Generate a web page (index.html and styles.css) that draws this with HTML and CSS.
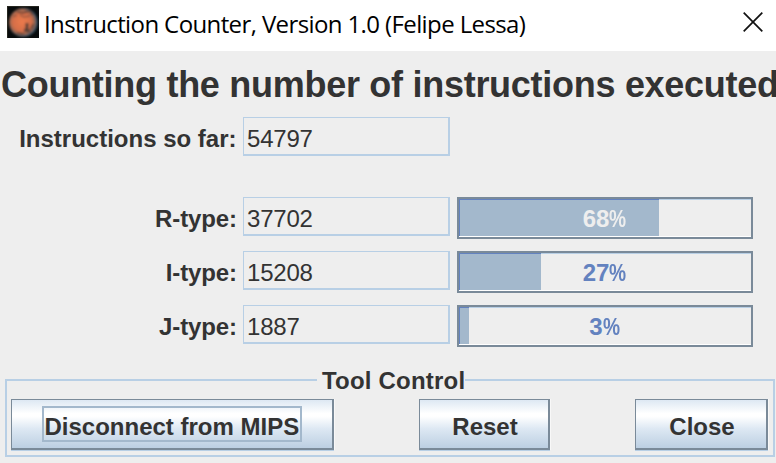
FILE: index.html
```html
<!DOCTYPE html>
<html lang="en">
<head>
<meta charset="utf-8">
<title>Instruction Counter</title>
<link rel="stylesheet" href="styles.css">
</head>
<body>
<header class="titlebar">
  <svg class="planet" width="32" height="32" viewBox="0 0 32 32">
    <defs>
      <radialGradient id="mars" cx="45%" cy="48%" r="54%">
        <stop offset="0" stop-color="#ec7a4c"/>
        <stop offset=".6" stop-color="#d46e48"/>
        <stop offset=".8" stop-color="#8f6350"/>
        <stop offset=".92" stop-color="#3f5666"/>
        <stop offset="1" stop-color="#142b3a"/>
      </radialGradient>
      <filter id="soft"><feGaussianBlur stdDeviation=".9"/></filter>
    </defs>
    <rect width="32" height="32" fill="#080b0c"/>
    <path d="M0 .5H32M.5 0V32" stroke="#26261f"/>
    <g filter="url(#soft)">
      <circle cx="16.5" cy="16.5" r="14.6" fill="url(#mars)"/>
      <g fill="none" stroke="#593f36">
        <path d="M10 6l6 1 7-2 3 4" stroke-width="1.6"/>
        <path d="M6 11l4-2M13 9l4 2 6-1" stroke-width=".8"/>
        <path d="M20 17v8M17 24l6 1" stroke-width="3"/>
        <path d="M26 18l-2 5M10 27l7 1" stroke-width="1.6"/>
      </g>
    </g>
  </svg>
  <h1 class="caption">Instruction Counter, Version 1.0 (Felipe Lessa)</h1>
  <svg class="close" width="20" height="20" viewBox="0 0 20 20"><path d="M.7 .7L19.3 19.3M19.3 .7L.7 19.3" stroke="#111" stroke-width="1.7"/></svg>
</header>
<main>
  <h2 class="heading">Counting the number of instructions executed</h2>
  <div class="row total"><label>Instructions so far:</label><div class="field">54797</div></div>
  <div class="row"><label>R-type:</label><div class="field">37702</div><div class="bar"><div class="fill" style="width:200px"></div><span class="pct light">68<span class="sign">%</span></span></div></div>
  <div class="row"><label>I-type:</label><div class="field">15208</div><div class="bar"><div class="fill" style="width:82px"></div><span class="pct">27<span class="sign">%</span></span></div></div>
  <div class="row"><label>J-type:</label><div class="field">1887</div><div class="bar"><div class="fill" style="width:10px"></div><span class="pct">3<span class="sign">%</span></span></div></div>
  <section class="control">
    <h3 class="legend">Tool Control</h3>
    <div class="button connect"><span class="focus">Disconnect from MIPS</span></div>
    <div class="button reset">Reset</div>
    <div class="button quit">Close</div>
  </section>
</main>
</body>
</html>
```
FILE: styles.css
```css
* { box-sizing: border-box; }
body {
  margin: 0;
  width: 776px;
  height: 463px;
  overflow: hidden;
  background: #eee;
  color: #333;
  font: 24px/28px "Liberation Sans", Arial, sans-serif;
  white-space: nowrap;
}
h1, h2, h3 { margin: 0; font-size: inherit; }
.titlebar {
  display: flex;
  height: 51px;
  padding: 6px 13px 0 7px;
  background: #fff;
}
.planet { flex: none; }
.caption {
  flex: 1;
  padding: 1px 0 0 5px;
  font: 24px/34px "Open Sans", "Noto Sans", sans-serif;
  color: #000;
  letter-spacing: -0.61px;
}
.close { margin-top: 6px; flex: none; }
.heading {
  height: 66px;
  padding: 13px 0 0 1px;
  font-size: 36px;
  line-height: 42px;
  letter-spacing: -0.28px;
}
.row {
  display: flex;
  height: 42px;
  margin-bottom: 12px;
}
.row.total { height: 39px; margin-bottom: 41px; }
label {
  width: 243px;
  padding: 8px 6px 0 0;
  text-align: right;
  font-weight: bold;
  letter-spacing: -0.1px;
}
.total label { letter-spacing: 0; padding-right: 6.5px; }
.field {
  width: 207px;
  height: 39px;
  margin-right: 7px;
  padding: 7px 3px 0;
  border: solid #b8cfe5;
  border-width: 1px 2px 2px 1px;
  letter-spacing: -0.2px;
}
.bar {
  display: grid;
  width: 296px;
  height: 42px;
  border: 2px solid #7a8a99;
  box-shadow: inset 0 1px #b8cfe5, inset 0 -1px #fff;
}
.bar > * { grid-area: 1 / 1; }
.fill {
  height: 37px;
  background: #a3b8cc;
  border: solid #6382bf;
  border-width: 1px 0 0 1px;
}
.pct {
  padding: 6px 1px 0 0;
  text-align: center;
  font-weight: bold;
  color: #6382bf;
}
.pct.light { color: #eee; }
.sign {
  display: inline-block;
  width: 17px;
  transform: scaleX(.8);
  transform-origin: left;
}
.control {
  position: relative;
  display: flex;
  width: 770px;
  height: 78px;
  margin: 32px 0 0 5px;
  padding: 18px 4px 0;
  border: 2px solid #b8cfe5;
}
.legend {
  position: absolute;
  top: -14px;
  left: 310px;
  width: 148px;
  padding-left: 5px;
  background: #eee;
  letter-spacing: 0.2px;
}
.button {
  display: flex;
  align-items: center;
  justify-content: center;
  height: 51px;
  padding: 6px 0 0 2px;
  border: solid #7a8a99;
  border-width: 1px 2px 2px 1px;
  background: linear-gradient(#dde8f3, #fff 28%, #fff 34%, #dde8f3 60%, #bccfe2);
  box-shadow: 1px 0 #f8f8f8, 0 1px #b8cfe5;
  font-weight: bold;
}
.connect { width: 323px; margin-right: 85px; }
.reset { width: 131px; margin-right: 85px; }
.quit { width: 133px; }
.focus {
  width: 260px;
  height: 36px;
  margin: -6px 0 0 -3px;
  padding: 5px 0 0 1px;
  border: 2px solid #a3b8cc;
}
```
